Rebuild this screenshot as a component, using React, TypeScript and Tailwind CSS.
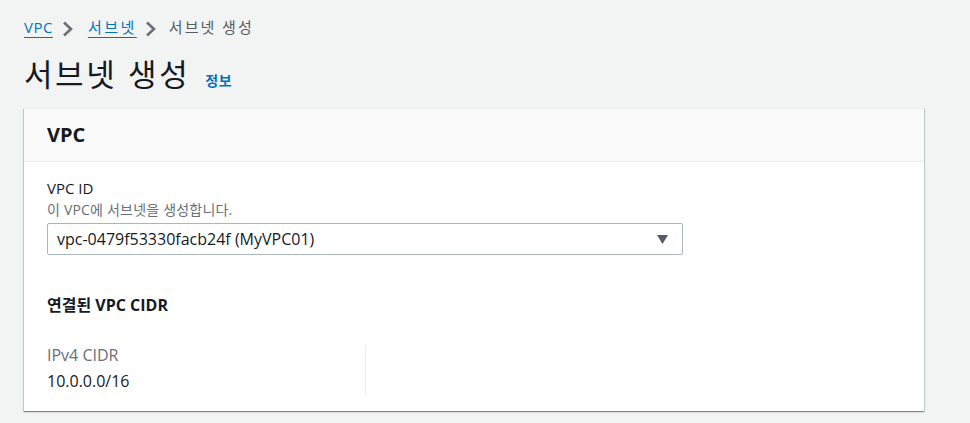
const font = { fontFamily: '"Open Sans", "Noto Sans CJK KR", sans-serif' };

function Chevron() {
  return (
    <svg width="12" height="16" viewBox="0 0 12 16" className="shrink-0 mt-[3px]">
      <path d="M2 1.5 L9 8 L2 14.5" fill="none" stroke="#687078" strokeWidth="2.6" />
    </svg>
  );
}

export default function App() {
  return (
    <div className="w-[970px] h-[423px] bg-[#f2f3f3] text-[#16191f] overflow-hidden" style={font}>
      <div className="pl-6 pr-[46px] pt-[15px]">
        <nav className="flex items-center text-[15px] leading-[24px]">
          <a className="text-[#0073bb] underline underline-offset-[4px] tracking-[0.5px]">VPC</a>
          <span className="ml-[9px] mr-[14px]"><Chevron /></span>
          <a className="text-[#0073bb] underline underline-offset-[4px] tracking-[2.5px]">서브넷</a>
          <span className="ml-[8px] mr-[12px]"><Chevron /></span>
          <span className="text-[#545b64] tracking-[2px]">서브넷 생성</span>
        </nav>

        <header className="flex items-baseline mt-[16px] h-[40px]">
          <h1 className="text-[31px] leading-[38px] font-normal tracking-[2.6px]">서브넷 생성</h1>
          <a className="ml-[15px] text-[14px] font-bold text-[#0073bb] tracking-[0.5px]">정보</a>
        </header>

        <section className="mt-[13px] bg-white border-t border-[#eaeded] shadow-[0_1px_1px_0_rgba(0,28,36,0.3),1px_1px_1px_0_rgba(0,28,36,0.15),-1px_1px_1px_0_rgba(0,28,36,0.15)]">
          <div className="h-[53px] bg-[#fafafa] border-b border-[#eaeded] px-[23px] flex items-center">
            <h2 className="text-[20px] font-bold leading-[24px]">VPC</h2>
          </div>

          <div className="px-[23px] pt-[15px] pb-[16px]">
            <div className="text-[15px] leading-[22px]">VPC ID</div>
            <div className="text-[14px] leading-[16px] text-[#687078] mt-[3px] tracking-[0.2px]">이 VPC에 서브넷을 생성합니다.</div>
            <div className="mt-[5px] w-[636px] h-[32px] border border-[#aab7b8] rounded-[2px] flex items-center justify-between pl-[9px] pr-[14px]">
              <span className="text-[16px]">vpc-0479f53330facb24f (MyVPC01)</span>
              <svg width="11" height="9" viewBox="0 0 11 9">
                <path d="M0 0 H11 L5.5 9 Z" fill="#545b64" />
              </svg>
            </div>

            <h3 className="mt-[39px] text-[16px] font-bold leading-[22px]">연결된 VPC CIDR</h3>

            <div className="mt-[30px] grid grid-cols-[319px_1fr]">
              <div className="border-r border-[#eaeded] pb-[3px]">
                <div className="text-[16px] leading-[22px] text-[#687078] mt-[-2px]">IPv4 CIDR</div>
                <div className="text-[16px] leading-[22px] mt-[4px]">10.0.0.0/16</div>
              </div>
              <div />
            </div>
          </div>
        </section>
      </div>
    </div>
  );
}
